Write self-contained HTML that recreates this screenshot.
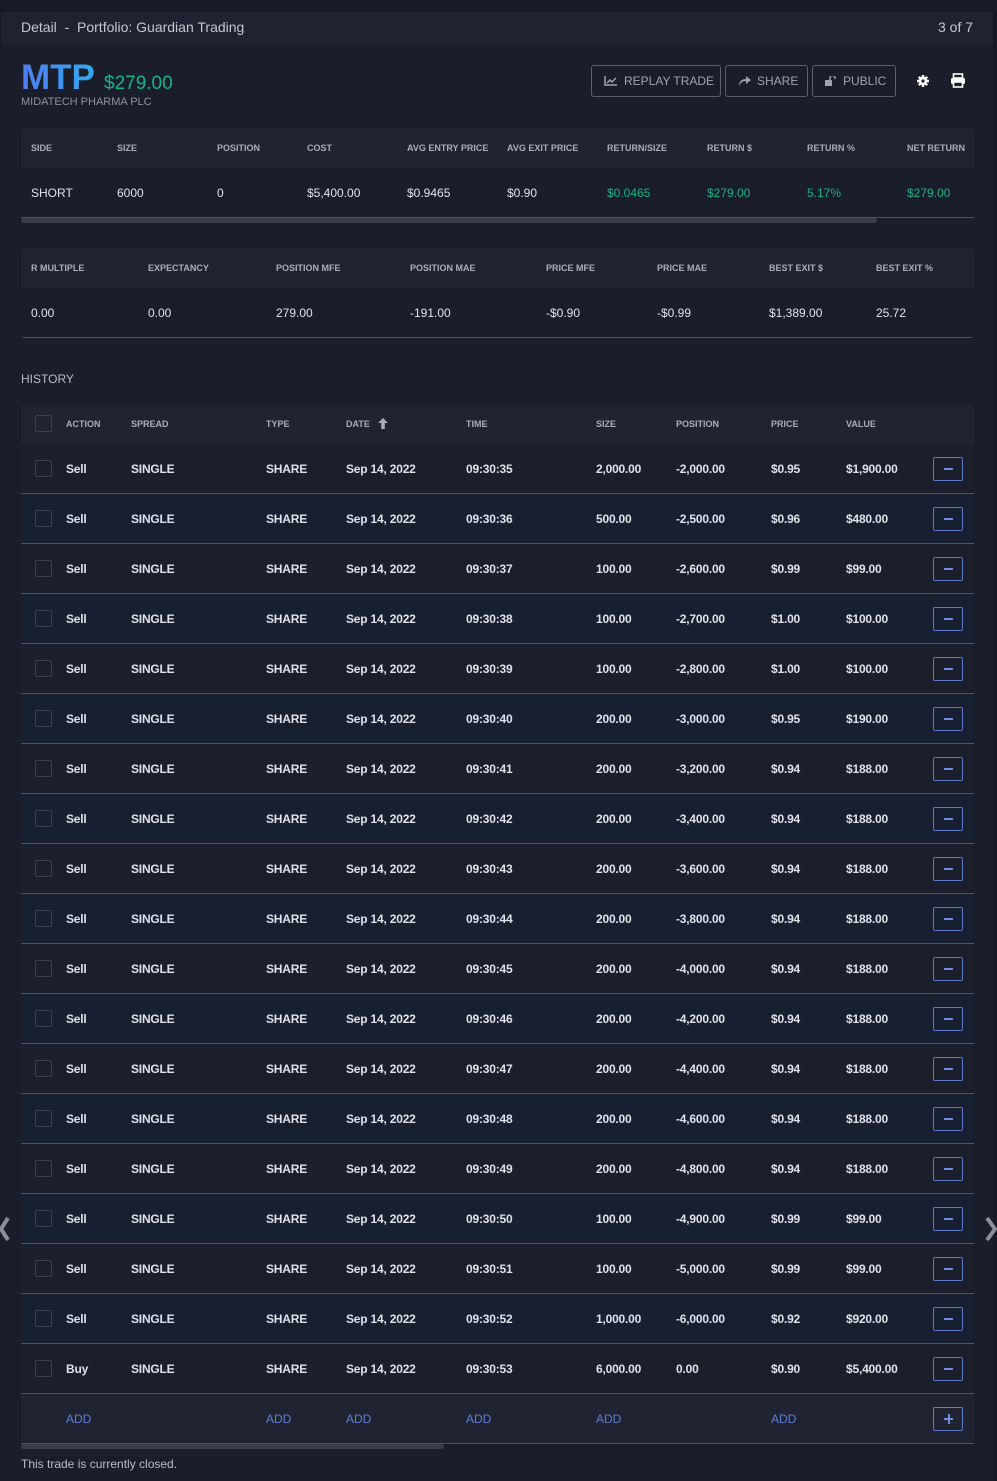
<!DOCTYPE html>
<html><head><style>
*{margin:0;padding:0;box-sizing:border-box}
body{width:997px;height:1481px;background:#161a24;font-family:"Liberation Sans",sans-serif;color:#d6d9e0;position:relative;overflow:hidden}
.panel{position:absolute;left:1px;top:12px;width:992px;height:1469px;background:#1a1e2a}
.hdr{position:absolute;left:1px;top:12px;width:992px;height:32px;background:#1f2331;font-size:14px;color:#c4c8d0}
.a{position:absolute;white-space:nowrap}
.th{font-size:9px;font-weight:bold;color:#a8aebb}
.td{font-size:12px;color:#e2e4ea}
.g{color:#13b38c}
.btn{position:absolute;top:65px;height:32px;border:1px solid #5a606c;border-radius:3px;font-size:12px;color:#9ea4b0;line-height:30px;padding-left:12px}
.row{position:absolute;left:21px;width:953px;height:50px;border-bottom:1px solid #4e535e}
.cb{position:absolute;left:14px;width:17px;height:17px;border:1px solid #3c404a;border-radius:2px}
.rt{font-size:12px;font-weight:bold;color:#dfe2e8;position:absolute;top:18px;letter-spacing:-0.2px}
.mb{position:absolute;left:912px;top:13px;width:30px;height:24px;border:1px solid #5b78c9;border-radius:2px}
.mb::after{content:"";position:absolute;left:10px;top:10px;width:9px;height:2px;background:#6f8de0}
</style></head><body>
<div class="panel"></div>
<div class="hdr"><span class="a" style="left:20px;top:7px">Detail&nbsp; - &nbsp;Portfolio: Guardian Trading</span><span class="a" style="left:937px;top:7px">3 of 7</span></div>
<div class="a" style="left:21px;top:58px;font-size:35px;font-weight:bold;background:linear-gradient(90deg,#4f7cf0,#35a9ee);-webkit-background-clip:text;color:transparent;line-height:40px">MTP</div>
<div class="a" style="left:104px;top:73px;font-size:19px;color:#13b38c">$279.00</div>
<div class="a" style="left:21px;top:96px;font-size:11px;color:#8d93a0">MIDATECH PHARMA PLC</div>
<div class="btn" style="left:591px;width:130px"><svg width="14" height="10" style="vertical-align:-1px;margin-right:6px" viewBox="0 0 14 10"><path d="M1 0v9h12" stroke="#9ea4b0" fill="none" stroke-width="1.5"/><path d="M3 7l3-3 2 2 4-4" stroke="#9ea4b0" fill="none" stroke-width="1.5"/></svg>REPLAY TRADE</div>
<div class="btn" style="left:725px;width:83px"><svg width="13" height="10" style="vertical-align:-1px;margin-right:6px" viewBox="0 0 13 10"><path d="M1 10C1 5 4 3 8 3V0l5 4-5 4V5C5 5 3 6 1 10z" fill="#9ea4b0"/></svg>SHARE</div>
<div class="btn" style="left:812px;width:84px"><svg width="12" height="10" style="vertical-align:-1px;margin-right:6px" viewBox="0 0 12 10"><rect x="0" y="4" width="7" height="6" fill="#9ea4b0"/><path d="M5 4V2a2.5 2.5 0 0 1 5 0v1" stroke="#9ea4b0" fill="none" stroke-width="1.5"/></svg>PUBLIC</div>
<svg class="a" style="left:917px;top:75px" width="12" height="12" viewBox="0 0 12 12"><circle cx="6" cy="6" r="4.2" fill="#fff"/><g stroke="#fff" stroke-width="2.4"><path d="M6 0v12M0 6h12M1.8 1.8l8.4 8.4M10.2 1.8l-8.4 8.4"/></g><circle cx="6" cy="6" r="1.6" fill="#1a1e2a"/></svg>
<svg class="a" style="left:950px;top:73px" width="16" height="15" viewBox="0 0 16 15"><rect x="3.5" y="1" width="9" height="4" fill="none" stroke="#fff" stroke-width="1.6"/><rect x="1" y="5" width="14" height="6" rx="1.5" fill="#fff"/><rect x="3.5" y="9" width="9" height="5" fill="#1a1e2a" stroke="#fff" stroke-width="1.6"/></svg>

<div class="a" style="left:21px;top:128px;width:953px;height:40px;background:#1f2332;border-radius:4px 4px 0 0"></div>
<div class="a" style="left:21px;top:217px;width:953px;height:1px;background:#4e535e"></div>
<div class="a" style="left:21px;top:218px;width:856px;height:5px;background:#3a3d4a;border-radius:3px"></div>
<div class="a th" style="left:31px;top:143px">SIDE</div><div class="a th" style="left:117px;top:143px">SIZE</div><div class="a th" style="left:217px;top:143px">POSITION</div><div class="a th" style="left:307px;top:143px">COST</div><div class="a th" style="left:407px;top:143px">AVG ENTRY PRICE</div><div class="a th" style="left:507px;top:143px">AVG EXIT PRICE</div><div class="a th" style="left:607px;top:143px">RETURN/SIZE</div><div class="a th" style="left:707px;top:143px">RETURN $</div><div class="a th" style="left:807px;top:143px">RETURN %</div><div class="a th" style="left:907px;top:143px">NET RETURN</div>
<div class="a td" style="left:31px;top:186px">SHORT</div><div class="a td" style="left:117px;top:186px">6000</div><div class="a td" style="left:217px;top:186px">0</div><div class="a td" style="left:307px;top:186px">$5,400.00</div><div class="a td" style="left:407px;top:186px">$0.9465</div><div class="a td" style="left:507px;top:186px">$0.90</div><div class="a td g" style="left:607px;top:186px">$0.0465</div><div class="a td g" style="left:707px;top:186px">$279.00</div><div class="a td g" style="left:807px;top:186px">5.17%</div><div class="a td g" style="left:907px;top:186px">$279.00</div>

<div class="a" style="left:21px;top:248px;width:953px;height:40px;background:#1f2332;border-radius:4px 4px 0 0"></div>
<div class="a" style="left:23px;top:337px;width:949px;height:1px;background:#4e535e"></div>
<div class="a th" style="left:31px;top:263px">R MULTIPLE</div><div class="a th" style="left:148px;top:263px">EXPECTANCY</div><div class="a th" style="left:276px;top:263px">POSITION MFE</div><div class="a th" style="left:410px;top:263px">POSITION MAE</div><div class="a th" style="left:546px;top:263px">PRICE MFE</div><div class="a th" style="left:657px;top:263px">PRICE MAE</div><div class="a th" style="left:769px;top:263px">BEST EXIT $</div><div class="a th" style="left:876px;top:263px">BEST EXIT %</div>
<div class="a td" style="left:31px;top:306px">0.00</div><div class="a td" style="left:148px;top:306px">0.00</div><div class="a td" style="left:276px;top:306px">279.00</div><div class="a td" style="left:410px;top:306px">-191.00</div><div class="a td" style="left:546px;top:306px">-$0.90</div><div class="a td" style="left:657px;top:306px">-$0.99</div><div class="a td" style="left:769px;top:306px">$1,389.00</div><div class="a td" style="left:876px;top:306px">25.72</div>

<div class="a" style="left:21px;top:372px;font-size:12px;color:#b8bdc7">HISTORY</div>

<div class="a" style="left:21px;top:404px;width:953px;height:40px;background:#1f2332;border-radius:4px 4px 0 0">
<div class="cb" style="top:11px"></div>
<div class="a th" style="left:45px;top:15px">ACTION</div><div class="a th" style="left:110px;top:15px">SPREAD</div><div class="a th" style="left:245px;top:15px">TYPE</div><div class="a th" style="left:325px;top:15px">DATE</div>
<svg class="a" style="left:357px;top:14px" width="10" height="11" viewBox="0 0 10 11"><path d="M5 0L0 5h3.2v6h3.6V5H10z" fill="#a8aebb"/></svg>
<div class="a th" style="left:445px;top:15px">TIME</div><div class="a th" style="left:575px;top:15px">SIZE</div><div class="a th" style="left:655px;top:15px">POSITION</div><div class="a th" style="left:750px;top:15px">PRICE</div><div class="a th" style="left:825px;top:15px">VALUE</div>
</div>

<div class="row" style="top:444px;background:#1a1f2b"><div class="cb" style="top:16px"></div><span class="rt" style="left:45px">Sell</span><span class="rt" style="left:110px">SINGLE</span><span class="rt" style="left:245px">SHARE</span><span class="rt" style="left:325px">Sep 14, 2022</span><span class="rt" style="left:445px">09:30:35</span><span class="rt" style="left:575px">2,000.00</span><span class="rt" style="left:655px">-2,000.00</span><span class="rt" style="left:750px">$0.95</span><span class="rt" style="left:825px">$1,900.00</span><div class="mb"></div></div>
<div class="row" style="top:494px;background:#171f30"><div class="cb" style="top:16px"></div><span class="rt" style="left:45px">Sell</span><span class="rt" style="left:110px">SINGLE</span><span class="rt" style="left:245px">SHARE</span><span class="rt" style="left:325px">Sep 14, 2022</span><span class="rt" style="left:445px">09:30:36</span><span class="rt" style="left:575px">500.00</span><span class="rt" style="left:655px">-2,500.00</span><span class="rt" style="left:750px">$0.96</span><span class="rt" style="left:825px">$480.00</span><div class="mb"></div></div>
<div class="row" style="top:544px;background:#1a1f2b"><div class="cb" style="top:16px"></div><span class="rt" style="left:45px">Sell</span><span class="rt" style="left:110px">SINGLE</span><span class="rt" style="left:245px">SHARE</span><span class="rt" style="left:325px">Sep 14, 2022</span><span class="rt" style="left:445px">09:30:37</span><span class="rt" style="left:575px">100.00</span><span class="rt" style="left:655px">-2,600.00</span><span class="rt" style="left:750px">$0.99</span><span class="rt" style="left:825px">$99.00</span><div class="mb"></div></div>
<div class="row" style="top:594px;background:#171f30"><div class="cb" style="top:16px"></div><span class="rt" style="left:45px">Sell</span><span class="rt" style="left:110px">SINGLE</span><span class="rt" style="left:245px">SHARE</span><span class="rt" style="left:325px">Sep 14, 2022</span><span class="rt" style="left:445px">09:30:38</span><span class="rt" style="left:575px">100.00</span><span class="rt" style="left:655px">-2,700.00</span><span class="rt" style="left:750px">$1.00</span><span class="rt" style="left:825px">$100.00</span><div class="mb"></div></div>
<div class="row" style="top:644px;background:#1a1f2b"><div class="cb" style="top:16px"></div><span class="rt" style="left:45px">Sell</span><span class="rt" style="left:110px">SINGLE</span><span class="rt" style="left:245px">SHARE</span><span class="rt" style="left:325px">Sep 14, 2022</span><span class="rt" style="left:445px">09:30:39</span><span class="rt" style="left:575px">100.00</span><span class="rt" style="left:655px">-2,800.00</span><span class="rt" style="left:750px">$1.00</span><span class="rt" style="left:825px">$100.00</span><div class="mb"></div></div>
<div class="row" style="top:694px;background:#171f30"><div class="cb" style="top:16px"></div><span class="rt" style="left:45px">Sell</span><span class="rt" style="left:110px">SINGLE</span><span class="rt" style="left:245px">SHARE</span><span class="rt" style="left:325px">Sep 14, 2022</span><span class="rt" style="left:445px">09:30:40</span><span class="rt" style="left:575px">200.00</span><span class="rt" style="left:655px">-3,000.00</span><span class="rt" style="left:750px">$0.95</span><span class="rt" style="left:825px">$190.00</span><div class="mb"></div></div>
<div class="row" style="top:744px;background:#1a1f2b"><div class="cb" style="top:16px"></div><span class="rt" style="left:45px">Sell</span><span class="rt" style="left:110px">SINGLE</span><span class="rt" style="left:245px">SHARE</span><span class="rt" style="left:325px">Sep 14, 2022</span><span class="rt" style="left:445px">09:30:41</span><span class="rt" style="left:575px">200.00</span><span class="rt" style="left:655px">-3,200.00</span><span class="rt" style="left:750px">$0.94</span><span class="rt" style="left:825px">$188.00</span><div class="mb"></div></div>
<div class="row" style="top:794px;background:#171f30"><div class="cb" style="top:16px"></div><span class="rt" style="left:45px">Sell</span><span class="rt" style="left:110px">SINGLE</span><span class="rt" style="left:245px">SHARE</span><span class="rt" style="left:325px">Sep 14, 2022</span><span class="rt" style="left:445px">09:30:42</span><span class="rt" style="left:575px">200.00</span><span class="rt" style="left:655px">-3,400.00</span><span class="rt" style="left:750px">$0.94</span><span class="rt" style="left:825px">$188.00</span><div class="mb"></div></div>
<div class="row" style="top:844px;background:#1a1f2b"><div class="cb" style="top:16px"></div><span class="rt" style="left:45px">Sell</span><span class="rt" style="left:110px">SINGLE</span><span class="rt" style="left:245px">SHARE</span><span class="rt" style="left:325px">Sep 14, 2022</span><span class="rt" style="left:445px">09:30:43</span><span class="rt" style="left:575px">200.00</span><span class="rt" style="left:655px">-3,600.00</span><span class="rt" style="left:750px">$0.94</span><span class="rt" style="left:825px">$188.00</span><div class="mb"></div></div>
<div class="row" style="top:894px;background:#171f30"><div class="cb" style="top:16px"></div><span class="rt" style="left:45px">Sell</span><span class="rt" style="left:110px">SINGLE</span><span class="rt" style="left:245px">SHARE</span><span class="rt" style="left:325px">Sep 14, 2022</span><span class="rt" style="left:445px">09:30:44</span><span class="rt" style="left:575px">200.00</span><span class="rt" style="left:655px">-3,800.00</span><span class="rt" style="left:750px">$0.94</span><span class="rt" style="left:825px">$188.00</span><div class="mb"></div></div>
<div class="row" style="top:944px;background:#1a1f2b"><div class="cb" style="top:16px"></div><span class="rt" style="left:45px">Sell</span><span class="rt" style="left:110px">SINGLE</span><span class="rt" style="left:245px">SHARE</span><span class="rt" style="left:325px">Sep 14, 2022</span><span class="rt" style="left:445px">09:30:45</span><span class="rt" style="left:575px">200.00</span><span class="rt" style="left:655px">-4,000.00</span><span class="rt" style="left:750px">$0.94</span><span class="rt" style="left:825px">$188.00</span><div class="mb"></div></div>
<div class="row" style="top:994px;background:#171f30"><div class="cb" style="top:16px"></div><span class="rt" style="left:45px">Sell</span><span class="rt" style="left:110px">SINGLE</span><span class="rt" style="left:245px">SHARE</span><span class="rt" style="left:325px">Sep 14, 2022</span><span class="rt" style="left:445px">09:30:46</span><span class="rt" style="left:575px">200.00</span><span class="rt" style="left:655px">-4,200.00</span><span class="rt" style="left:750px">$0.94</span><span class="rt" style="left:825px">$188.00</span><div class="mb"></div></div>
<div class="row" style="top:1044px;background:#1a1f2b"><div class="cb" style="top:16px"></div><span class="rt" style="left:45px">Sell</span><span class="rt" style="left:110px">SINGLE</span><span class="rt" style="left:245px">SHARE</span><span class="rt" style="left:325px">Sep 14, 2022</span><span class="rt" style="left:445px">09:30:47</span><span class="rt" style="left:575px">200.00</span><span class="rt" style="left:655px">-4,400.00</span><span class="rt" style="left:750px">$0.94</span><span class="rt" style="left:825px">$188.00</span><div class="mb"></div></div>
<div class="row" style="top:1094px;background:#171f30"><div class="cb" style="top:16px"></div><span class="rt" style="left:45px">Sell</span><span class="rt" style="left:110px">SINGLE</span><span class="rt" style="left:245px">SHARE</span><span class="rt" style="left:325px">Sep 14, 2022</span><span class="rt" style="left:445px">09:30:48</span><span class="rt" style="left:575px">200.00</span><span class="rt" style="left:655px">-4,600.00</span><span class="rt" style="left:750px">$0.94</span><span class="rt" style="left:825px">$188.00</span><div class="mb"></div></div>
<div class="row" style="top:1144px;background:#1a1f2b"><div class="cb" style="top:16px"></div><span class="rt" style="left:45px">Sell</span><span class="rt" style="left:110px">SINGLE</span><span class="rt" style="left:245px">SHARE</span><span class="rt" style="left:325px">Sep 14, 2022</span><span class="rt" style="left:445px">09:30:49</span><span class="rt" style="left:575px">200.00</span><span class="rt" style="left:655px">-4,800.00</span><span class="rt" style="left:750px">$0.94</span><span class="rt" style="left:825px">$188.00</span><div class="mb"></div></div>
<div class="row" style="top:1194px;background:#171f30"><div class="cb" style="top:16px"></div><span class="rt" style="left:45px">Sell</span><span class="rt" style="left:110px">SINGLE</span><span class="rt" style="left:245px">SHARE</span><span class="rt" style="left:325px">Sep 14, 2022</span><span class="rt" style="left:445px">09:30:50</span><span class="rt" style="left:575px">100.00</span><span class="rt" style="left:655px">-4,900.00</span><span class="rt" style="left:750px">$0.99</span><span class="rt" style="left:825px">$99.00</span><div class="mb"></div></div>
<div class="row" style="top:1244px;background:#1a1f2b"><div class="cb" style="top:16px"></div><span class="rt" style="left:45px">Sell</span><span class="rt" style="left:110px">SINGLE</span><span class="rt" style="left:245px">SHARE</span><span class="rt" style="left:325px">Sep 14, 2022</span><span class="rt" style="left:445px">09:30:51</span><span class="rt" style="left:575px">100.00</span><span class="rt" style="left:655px">-5,000.00</span><span class="rt" style="left:750px">$0.99</span><span class="rt" style="left:825px">$99.00</span><div class="mb"></div></div>
<div class="row" style="top:1294px;background:#171f30"><div class="cb" style="top:16px"></div><span class="rt" style="left:45px">Sell</span><span class="rt" style="left:110px">SINGLE</span><span class="rt" style="left:245px">SHARE</span><span class="rt" style="left:325px">Sep 14, 2022</span><span class="rt" style="left:445px">09:30:52</span><span class="rt" style="left:575px">1,000.00</span><span class="rt" style="left:655px">-6,000.00</span><span class="rt" style="left:750px">$0.92</span><span class="rt" style="left:825px">$920.00</span><div class="mb"></div></div>
<div class="row" style="top:1344px;background:#1a1f2b"><div class="cb" style="top:16px"></div><span class="rt" style="left:45px">Buy</span><span class="rt" style="left:110px">SINGLE</span><span class="rt" style="left:245px">SHARE</span><span class="rt" style="left:325px">Sep 14, 2022</span><span class="rt" style="left:445px">09:30:53</span><span class="rt" style="left:575px">6,000.00</span><span class="rt" style="left:655px">0.00</span><span class="rt" style="left:750px">$0.90</span><span class="rt" style="left:825px">$5,400.00</span><div class="mb"></div></div>
<div class="row" style="top:1394px;background:#1f2332">
<span class="a" style="left:45px;top:18px;font-size:12px;color:#5b7fd6">ADD</span><span class="a" style="left:245px;top:18px;font-size:12px;color:#5b7fd6">ADD</span><span class="a" style="left:325px;top:18px;font-size:12px;color:#5b7fd6">ADD</span><span class="a" style="left:445px;top:18px;font-size:12px;color:#5b7fd6">ADD</span><span class="a" style="left:575px;top:18px;font-size:12px;color:#5b7fd6">ADD</span><span class="a" style="left:750px;top:18px;font-size:12px;color:#5b7fd6">ADD</span>
<div class="mb"><div style="position:absolute;left:14px;top:6px;width:2px;height:10px;background:#6f8de0"></div></div></div>
<div class="a" style="left:21px;top:1444px;width:423px;height:5px;background:#3a3d4a;border-radius:3px"></div>
<div class="a" style="left:21px;top:1457px;font-size:12px;color:#b8bdc7">This trade is currently closed.</div>
<svg class="a" style="left:0;top:1216px" width="10" height="26" viewBox="0 0 10 26"><path d="M8 2L1 13l7 11" stroke="#8a8f99" stroke-width="4" fill="none"/></svg>
<svg class="a" style="left:985px;top:1216px" width="12" height="26" viewBox="0 0 12 26"><path d="M2 2l8 11-8 11" stroke="#8a8f99" stroke-width="4" fill="none"/></svg>
</body></html>
